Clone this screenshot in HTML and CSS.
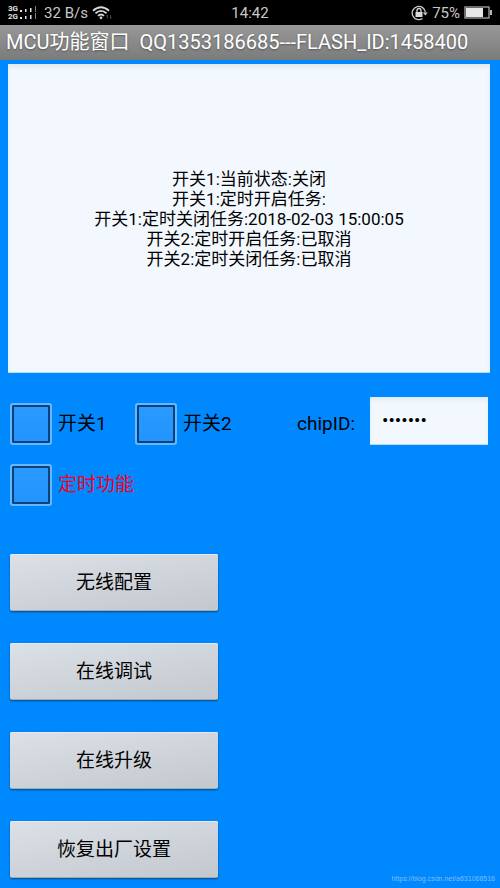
FILE: index.html
```html
<!DOCTYPE html>
<html lang="zh-CN">
<head>
<meta charset="utf-8">
<meta name="viewport" content="width=device-width, initial-scale=1">
<title>MCU功能窗口</title>
<link rel="stylesheet" href="styles.css">
</head>
<body>
<div class="status-bar">
  <div class="status-side">
    <div class="networks"><span>3G</span><span>2G</span></div>
    <svg class="signal" width="18" height="14" viewBox="0 0 18 14" aria-hidden="true">
      <g fill="#e4e4e4">
        <path d="M1 4h2v2H1zM6 3h1.500v3H6zM11 2h1.500v4H11zM1 11h2v2H1zM6 10h1.500v3H6zM11 9h1.500v4H11z"/>
        <path fill="#858585" d="M16 0h1v6h-1zM16 7h1v6h-1z"/>
      </g>
    </svg>
    <span class="speed">32 B/s</span>
    <svg class="wifi" width="21" height="14" viewBox="0 0 21 14" aria-hidden="true">
      <g fill="none" stroke="#d8d8d8" stroke-width="1.800">
        <path d="M1 4.700Q9 -2.300 17 4.700"/>
        <path d="M3.500 7.300Q9 2.500 14.500 7.300"/>
        <path d="M6 9.900Q9 7.200 12 9.900"/>
      </g>
      <circle cx="9" cy="11.800" r="1.400" fill="#d8d8d8"/>
      <path d="M15.500 12.500V9M14.300 10.200l1.200-1.200M18.500 9v3.500M19.700 11.300l-1.200 1.200" fill="none" stroke="#444"/>
    </svg>
  </div>
  <span class="clock">14:42</span>
  <div class="status-side status-right">
    <svg width="17" height="16" viewBox="0 0 17 16" aria-hidden="true">
      <path d="M11.500 13.500A6.600 6.600 0 1 1 14.400 7.500" fill="none" stroke="#c8c8c8" stroke-width="1.300"/>
      <path d="M11.800 7.500h5l-2.500 3z" fill="#c8c8c8"/>
      <rect x="4.500" y="7" width="7" height="5" fill="#d8d8d8"/>
      <path d="M6 7V5.500a2 2 0 0 1 4 0V7" fill="none" stroke="#d8d8d8" stroke-width="1.300"/>
    </svg>
    <span class="percent">75%</span>
    <svg width="28" height="13" viewBox="0 0 28 13" aria-hidden="true">
      <rect x="1" y="1" width="24" height="11" fill="none" stroke="#a8a8a8" stroke-width="1.300"/>
      <rect x="2" y="2" width="17" height="9" fill="#e6e6e6"/>
      <rect x="26" y="4" width="2" height="5" fill="#b8b8b8"/>
    </svg>
  </div>
</div>
<h1 class="title-bar"><span>MCU功能窗口</span><span>QQ1353186685---FLASH_ID:1458400</span></h1>
<main>
  <section class="log">
    <p>开关1:当前状态:关闭</p>
    <p>开关1:定时开启任务:</p>
    <p>开关1:定时关闭任务:2018-02-03 15:00:05</p>
    <p>开关2:定时开启任务:已取消</p>
    <p>开关2:定时关闭任务:已取消</p>
  </section>
  <div class="controls">
    <label class="check"><input type="checkbox">开关1</label>
    <label class="check"><input type="checkbox">开关2</label>
    <label class="chip-label" for="chip">chipID:</label>
    <input class="chip" id="chip" type="password" value="1458400">
  </div>
  <label class="check timer"><input type="checkbox">定时功能</label>
  <div class="actions">
    <button type="button">无线配置</button>
    <button type="button">在线调试</button>
    <button type="button">在线升级</button>
    <button type="button">恢复出厂设置</button>
  </div>
</main>
<span class="watermark">https://blog.csdn.net/a631068516</span>
</body>
</html>
```
FILE: styles.css
```css
* {
  box-sizing: border-box;
}

body {
  margin: 0;
  min-height: 100vh;
  position: relative;
  background: #0088ff;
  color: #000;
  font: 19px/24px Roboto, "Noto Sans CJK SC", sans-serif;
}

.status-bar {
  display: flex;
  align-items: center;
  height: 25px;
  padding: 0 8px;
  background: #000;
  color: #c8c8c8;
  font-size: 15px;
}

.status-side {
  display: flex;
  flex: 1;
  align-items: center;
}

.status-right {
  justify-content: flex-end;
  gap: 4px;
}

.networks {
  display: flex;
  flex-direction: column;
  color: #e4e4e4;
  font-size: 8px;
  font-weight: 700;
  line-height: 8px;
}

.signal {
  margin-left: 1px;
}

.speed {
  margin: 0 4px 0 7px;
}

.title-bar {
  display: flex;
  gap: 10px;
  margin: 0;
  padding: 0 6px;
  border-bottom: 1px solid #777;
  background: linear-gradient(#989898, #7c7c7c);
  color: #fff;
  font-size: 20px;
  font-weight: 400;
  line-height: 34px;
  text-shadow: 0 1px 2px #555;
  white-space: nowrap;
}

main {
  padding: 4px 10px 10px;
}

.log {
  display: flex;
  flex-direction: column;
  justify-content: center;
  min-height: 309px;
  margin: 0 0 0 -2px;
  padding-top: 2px;
  border-bottom: 1px solid #b9dcfb;
  background: #f2f8fe;
  box-shadow: inset 0 3px 4px #e2e9ef;
  font-size: 17px;
  line-height: 20px;
  text-align: center;
}

.log p {
  margin: 0;
}

.controls {
  display: flex;
  align-items: center;
  margin-top: 23px;
}

.check {
  display: flex;
  align-items: center;
  gap: 6px;
  min-width: 125px;
}

.check input {
  appearance: none;
  width: 42px;
  height: 42px;
  margin: 0;
  border: 2px solid #66b7ff;
  border-radius: 3px;
  background: linear-gradient(#2c9aff, #2194ff);
  box-shadow: inset 0 0 0 2px #0b4279;
}

.controls .check {
  margin-top: 7px;
}

.chip-label {
  margin: 7px 15px 0 auto;
}

.chip {
  width: 118px;
  height: 48px;
  margin-right: 2px;
  padding: 0 12px;
  border: 0;
  border-bottom: 1px solid #b9dcfb;
  border-radius: 0;
  background: #f2f8fe;
  box-shadow: inset 0 3px 4px #e2e9ef;
  color: #000;
  font: inherit;
}

.timer {
  width: max-content;
  margin-top: 19px;
  color: #f5001d;
}

.actions {
  display: flex;
  flex-direction: column;
  align-items: flex-start;
  gap: 32px;
  margin-top: 48px;
}

.actions button {
  width: 208px;
  height: 57px;
  padding: 2px 0 0;
  border: 0;
  border-bottom: 1px solid #a2abb4;
  border-radius: 2px;
  background: linear-gradient(170deg, #dce0e7, #c3c8ce);
  box-shadow: inset 0 1px #e7ebf0, 0 1px 2px #034984;
  color: #000;
  font: inherit;
}

.watermark {
  position: absolute;
  right: 5px;
  bottom: 2px;
  color: #80bcf5;
  font: 7px/14px "Liberation Sans", sans-serif;
}
```
